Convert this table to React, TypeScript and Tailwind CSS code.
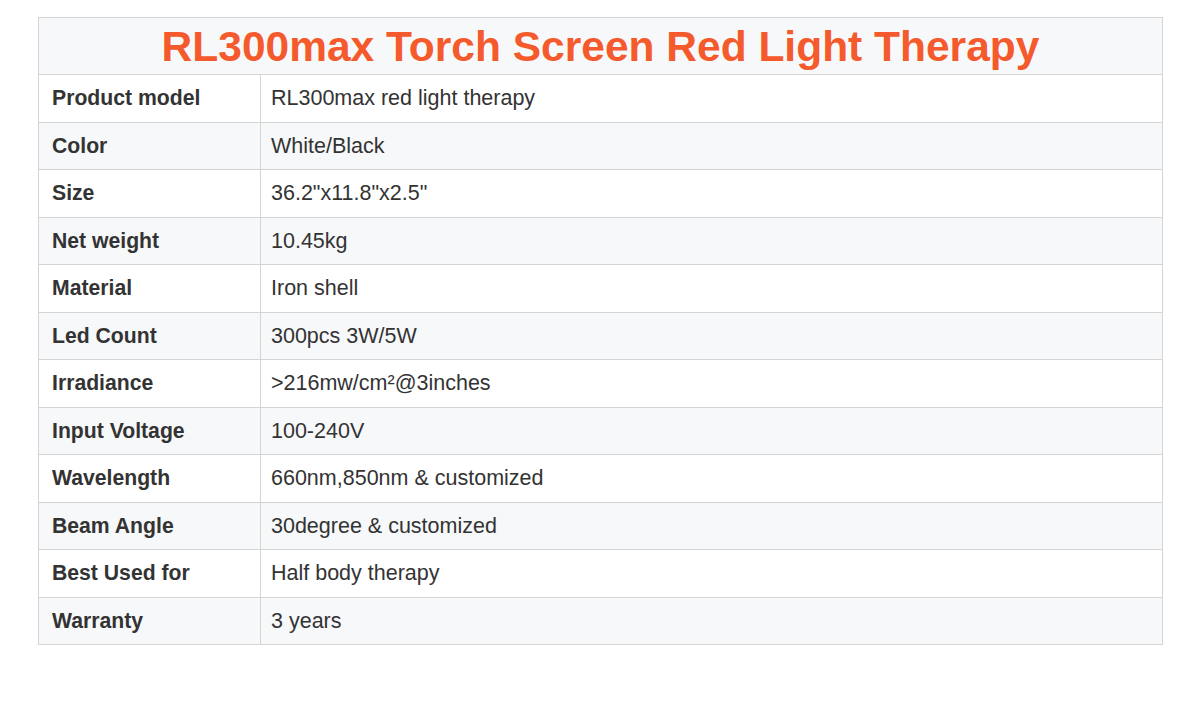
const rows: [string, string][] = [
  ["Product model", "RL300max red light therapy"],
  ["Color", "White/Black"],
  ["Size", '36.2"x11.8"x2.5"'],
  ["Net weight", "10.45kg"],
  ["Material", "Iron shell"],
  ["Led Count", "300pcs 3W/5W"],
  ["Irradiance", ">216mw/cm²@3inches"],
  ["Input Voltage", "100-240V"],
  ["Wavelength", "660nm,850nm & customized"],
  ["Beam Angle", "30degree & customized"],
  ["Best Used for", "Half body therapy"],
  ["Warranty", "3 years"],
];

export default function App() {
  return (
    <div className="min-h-[715px] bg-white pt-[17px] pl-[38px] font-['Liberation_Sans',Arial,sans-serif]">
      <table className="w-[1125px] border-collapse text-[#333]">
        <thead>
          <tr className="h-[57px] bg-[#f7f8fa]">
            <th
              colSpan={2}
              className="border border-[#d4d4d4] pt-[2px] text-center text-[42.5px] font-bold leading-none text-[#f55a2c]"
            >
              RL300max Torch Screen Red Light Therapy
            </th>
          </tr>
        </thead>
        <tbody>
          {rows.map(([label, value], i) => (
            <tr key={label} className={`h-[47.5px] ${i % 2 === 1 ? "bg-[#f7f8fa]" : "bg-white"}`}>
              <td className="w-[222px] border border-[#d4d4d4] pl-[13px] text-[21.2px] font-bold">{label}</td>
              <td className="border border-[#d4d4d4] pl-[10px] text-[21.5px]">{value}</td>
            </tr>
          ))}
        </tbody>
      </table>
    </div>
  );
}
